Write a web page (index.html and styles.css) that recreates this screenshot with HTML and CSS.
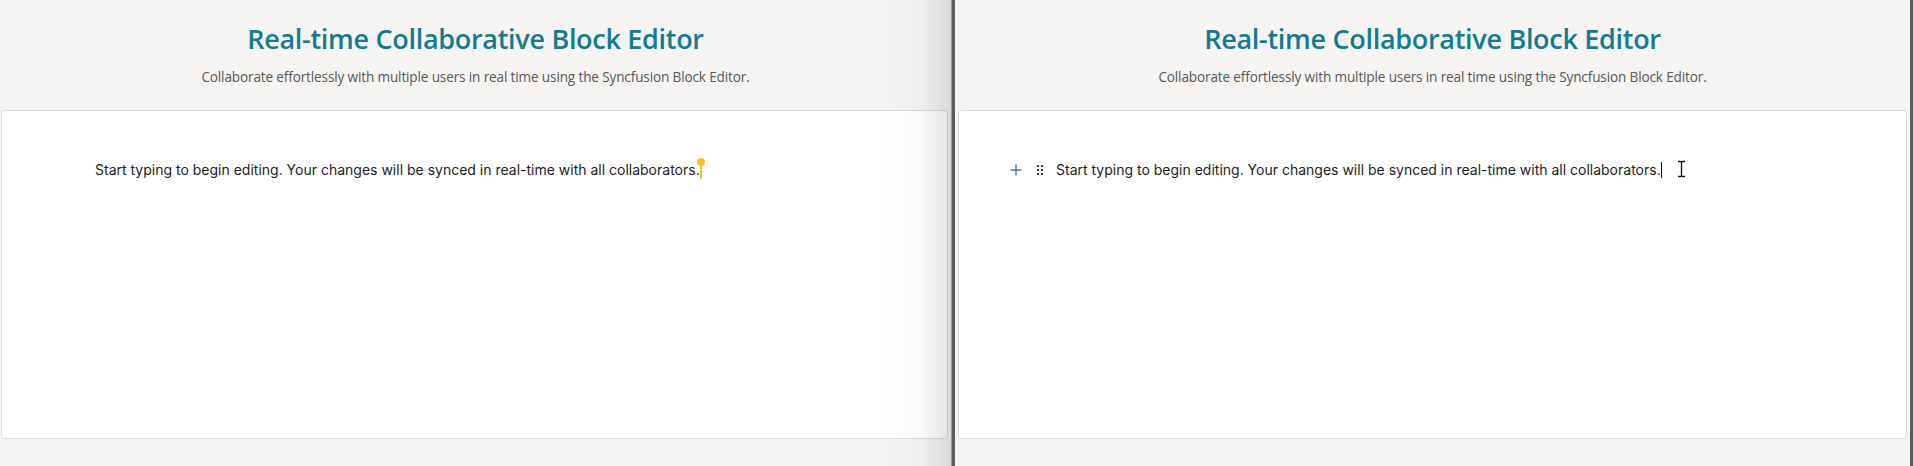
FILE: index.html
```html
<!DOCTYPE html>
<html lang="en">
<head>
<meta charset="utf-8">
<title>Real-time Collaborative Block Editor</title>
<link rel="stylesheet" href="styles.css">
</head>
<body>
<div class="desk">
  <section class="pane pane-left">
    <header class="head">
      <h1 class="title">Real-time Collaborative Block Editor</h1>
      <p class="subtitle">Collaborate effortlessly with multiple users in real time using the Syncfusion Block Editor.</p>
    </header>
    <div class="card card-left">
      <div class="block">
        <div class="controls hidden">
          <span class="plus"></span>
          <span class="handle"><i></i><i></i><i></i><i></i><i></i><i></i></span>
        </div>
        <p class="text">Start typing to begin editing. Your changes will be synced in real-time with all collaborators.<span class="remote-caret"></span></p>
      </div>
    </div>
  </section>
  <div class="divider"></div>
  <section class="pane pane-right">
    <header class="head">
      <h1 class="title">Real-time Collaborative Block Editor</h1>
      <p class="subtitle">Collaborate effortlessly with multiple users in real time using the Syncfusion Block Editor.</p>
    </header>
    <div class="card card-right">
      <div class="block">
        <div class="controls">
          <svg class="plus-icon" width="12" height="12" viewBox="0 0 12 12"><path d="M6 0.5V11.5M0.5 6H11.5" stroke="#4f6f9a" stroke-width="1.4" fill="none"/></svg>
          <span class="handle"><i></i><i></i><i></i><i></i><i></i><i></i></span>
        </div>
        <p class="text">Start typing to begin editing. Your changes will be synced in real-time with all collaborators.<span class="local-caret"></span></p>
        <svg class="ibeam" width="9" height="18" viewBox="0 0 9 18"><path d="M1 1.5H3.5Q4.5 1.5 4.5 2.5V15.5Q4.5 16.5 3.5 16.5H1M8 1.5H5.5Q4.5 1.5 4.5 2.5M4.5 15.5Q4.5 16.5 5.5 16.5H8" stroke="#111" stroke-width="1.3" fill="none"/></svg>
      </div>
    </div>
  </section>
  <div class="edge"></div>
</div>
</body>
</html>
```

FILE: styles.css
```css
html, body {
  margin: 0;
  padding: 0;
  height: 100%;
  background: #f5f4f2;
}
.desk {
  display: flex;
  height: 466px;
  width: 1913px;
  overflow: hidden;
}
.pane {
  position: relative;
  display: flex;
  flex-direction: column;
  background: #f5f4f2;
  height: 466px;
}
.pane-left {
  width: 951px;
}
.pane-left::after {
  content: "";
  position: absolute;
  top: 0;
  right: 0;
  width: 70px;
  height: 100%;
  background: linear-gradient(to right, rgba(0,0,0,0) 0%, rgba(0,0,0,0.02) 55%, rgba(0,0,0,0.11) 100%);
  pointer-events: none;
}
.pane-right {
  width: 955px;
}
.divider {
  width: 3px;
  background: #5c5c5c;
  border-left: 1px solid #9a9a9a;
}
.edge {
  width: 3px;
  background: #5c5c5c;
}
.head {
  height: 110px;
  box-sizing: border-box;
  padding-top: 22px;
  text-align: center;
}
.title {
  margin: 0;
  font-family: "Open Sans", "Noto Sans", sans-serif;
  font-weight: 600;
  font-size: 27px;
  line-height: 34px;
  color: #137b90;
  letter-spacing: -0.3px;
}
.subtitle {
  margin: 12px 0 0;
  font-family: "Open Sans", "Noto Sans", sans-serif;
  font-size: 13.6px;
  line-height: 18px;
  color: #585858;
  letter-spacing: -0.15px;
}
.card {
  height: 329px;
  box-sizing: border-box;
  background: #ffffff;
  border: 1px solid #dcdbd9;
  border-radius: 4px;
}
.card-left {
  margin: 0 3px 0 1px;
}
.card-right {
  margin: 0 3px 0 3px;
}
.block {
  display: flex;
  align-items: center;
  padding: 49px 0 0 47px;
  height: 20px;
}
.card-right .block {
  padding-left: 51px;
}
.controls {
  display: flex;
  align-items: center;
  width: 46px;
  flex: none;
}
.controls.hidden {
  visibility: hidden;
}
.plus-icon {
  display: block;
}
.handle {
  display: grid;
  grid-template-columns: 2px 2px;
  grid-auto-rows: 2px;
  column-gap: 2px;
  row-gap: 2px;
  margin-left: 15px;
}
.handle i {
  display: block;
  width: 2px;
  height: 2px;
  background: #3a3a3a;
}
.text {
  margin: 0;
  font-family: Inter, "Noto Sans", sans-serif;
  font-size: 14px;
  line-height: 20px;
  color: #1c1c24;
  letter-spacing: 0;
  white-space: nowrap;
  position: relative;
}
.remote-caret {
  position: relative;
  display: inline-block;
  width: 2px;
  height: 17px;
  background: #f7c325;
  vertical-align: -4px;
}
.remote-caret::before {
  content: "";
  position: absolute;
  top: -4px;
  left: -3px;
  width: 8px;
  height: 8px;
  border-radius: 50%;
  background: #f7c325;
}
.local-caret {
  display: inline-block;
  width: 1px;
  height: 16px;
  background: #111;
  vertical-align: -3px;
}
.ibeam {
  display: block;
  margin-left: 15px;
  margin-top: -3px;
}
```
